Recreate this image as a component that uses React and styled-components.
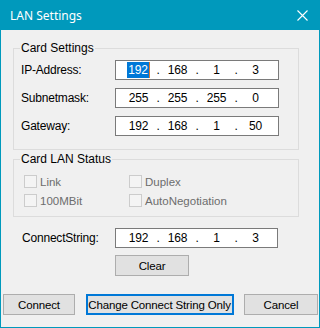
import React from "react";
import styled, { createGlobalStyle } from "styled-components";

const GlobalStyle = createGlobalStyle`
  html, body {
    margin: 0;
    padding: 0;
    background: #f0f0f0;
  }
  * {
    box-sizing: border-box;
  }
`;

const Window = styled.div`
  width: 320px;
  height: 328px;
  display: flex;
  flex-direction: column;
  background: #f0f0f0;
  border: 1px solid #0099bc;
  border-top: none;
  font-family: "Liberation Sans", Arial, sans-serif;
  font-size: 11px;
  color: #000;
`;

const TitleBar = styled.div`
  height: 30px;
  flex: none;
  margin: 0 -1px;
  padding: 0 10px;
  background: #0099bc;
  color: #fff;
  display: flex;
  align-items: center;
  justify-content: space-between;
  font-family: "Noto Sans", sans-serif;
  font-size: 12px;
`;

const CloseButton = styled.div`
  width: 14px;
  height: 14px;
  display: flex;
  align-items: center;
  justify-content: center;
  margin-right: 1px;
`;

const Body = styled.div`
  flex: none;
  padding: 0 20px 0 12px;
  display: flex;
  flex-direction: column;
`;

const Group = styled.fieldset`
  margin: ${(p) => p.$top}px 0 0 0;
  padding: ${(p) => p.$pad};
  border: 1px solid #dcdcdc;
  min-width: 0;
`;

const Legend = styled.legend`
  padding: 0 1px;
  margin-left: -1px;
  line-height: 15px;
  font-size: 12px;
`;

const Rows = styled.div`
  display: flex;
  flex-direction: column;
  gap: 8px;
`;

const Row = styled.div`
  display: flex;
  align-items: center;
  height: 20px;
`;

const Label = styled.div`
  width: ${(p) => p.$width}px;
  padding-left: ${(p) => p.$indent || 0}px;
  flex: none;
  font-size: 12px;
  letter-spacing: -0.2px;
`;

const IpBox = styled.div`
  width: ${(p) => p.$width}px;
  height: 20px;
  background: #fff;
  border: 1px solid #7a7a7a;
  display: flex;
  align-items: center;
  padding-left: 6px;
  font-size: 12px;
  letter-spacing: -0.2px;
`;

const Segment = styled.span`
  width: 33px;
  text-align: center;
`;

const Dot = styled.span`
  width: 6px;
  text-align: center;
`;

const Selected = styled.span`
  background: #0078d7;
  color: #fff;
  padding: 1px;
  border-right: 1px solid #e07a30;
`;

const CheckGrid = styled.div`
  display: grid;
  grid-template-columns: 105px 1fr;
  padding-left: 3px;
`;

const CheckItem = styled.label`
  display: flex;
  align-items: center;
  gap: 3px;
  height: 19px;
  color: #6d6d6d;
  font-size: 11.5px;
`;

const Box = styled.span`
  width: 13px;
  height: 13px;
  border: 1px solid #cccccc;
  background: #f4f4f4;
  flex: none;
`;

const ConnectRow = styled(Row)`
  margin-top: 11px;
`;

const ClearRow = styled.div`
  margin-top: 7px;
  padding-left: 102px;
`;

const Button = styled.button`
  width: ${(p) => p.$width}px;
  height: 21px;
  padding: 0;
  white-space: nowrap;
  font-family: "Liberation Sans", Arial, sans-serif;
  font-size: 11.5px;
  letter-spacing: -0.15px;
  color: #000;
  background: #e1e1e1;
  border: ${(p) => (p.$focused ? "2px solid #0078d7" : "1px solid #adadad")};
`;

const Footer = styled.div`
  margin-top: 18px;
  padding: 0 1px 0 2px;
  display: flex;
  justify-content: space-between;
`;

const IpField = ({ parts, width, selectFirst }) => (
  <IpBox $width={width}>
    {parts.map((p, i) => (
      <React.Fragment key={i}>
        {i > 0 && <Dot>.</Dot>}
        <Segment>{i === 0 && selectFirst ? <Selected>{p}</Selected> : p}</Segment>
      </React.Fragment>
    ))}
  </IpBox>
);

export default function App() {
  return (
    <>
      <GlobalStyle />
      <Window>
        <TitleBar>
          <span>LAN Settings</span>
          <CloseButton>
            <svg width="11" height="11" viewBox="0 0 11 11">
              <path d="M0.5 0.5 L10.5 10.5 M10.5 0.5 L0.5 10.5" stroke="#fff" strokeWidth="1.1" />
            </svg>
          </CloseButton>
        </TitleBar>
        <Body>
          <Group $top={11} $pad="4px 7px 13px 7px">
            <Legend>Card Settings</Legend>
            <Rows>
              <Row>
                <Label $width={94}>IP-Address:</Label>
                <IpField parts={["192", "168", "1", "3"]} width={164} selectFirst />
              </Row>
              <Row>
                <Label $width={94}>Subnetmask:</Label>
                <IpField parts={["255", "255", "255", "0"]} width={164} />
              </Row>
              <Row>
                <Label $width={94}>Gateway:</Label>
                <IpField parts={["192", "168", "1", "50"]} width={164} />
              </Row>
            </Rows>
          </Group>
          <Group $top={2} $pad="5px 7px 6px 7px">
            <Legend>Card LAN Status</Legend>
            <CheckGrid>
              <CheckItem><Box />Link</CheckItem>
              <CheckItem><Box />Duplex</CheckItem>
              <CheckItem><Box />100MBit</CheckItem>
              <CheckItem><Box />AutoNegotiation</CheckItem>
            </CheckGrid>
          </Group>
          <ConnectRow>
            <Label $width={102} $indent={9}>ConnectString:</Label>
            <IpField parts={["192", "168", "1", "3"]} width={163} />
          </ConnectRow>
          <ClearRow>
            <Button $width={74}>Clear</Button>
          </ClearRow>
        </Body>
        <Footer>
          <Button $width={72}>Connect</Button>
          <Button $width={148} $focused>Change Connect String Only</Button>
          <Button $width={74}>Cancel</Button>
        </Footer>
      </Window>
    </>
  );
}
